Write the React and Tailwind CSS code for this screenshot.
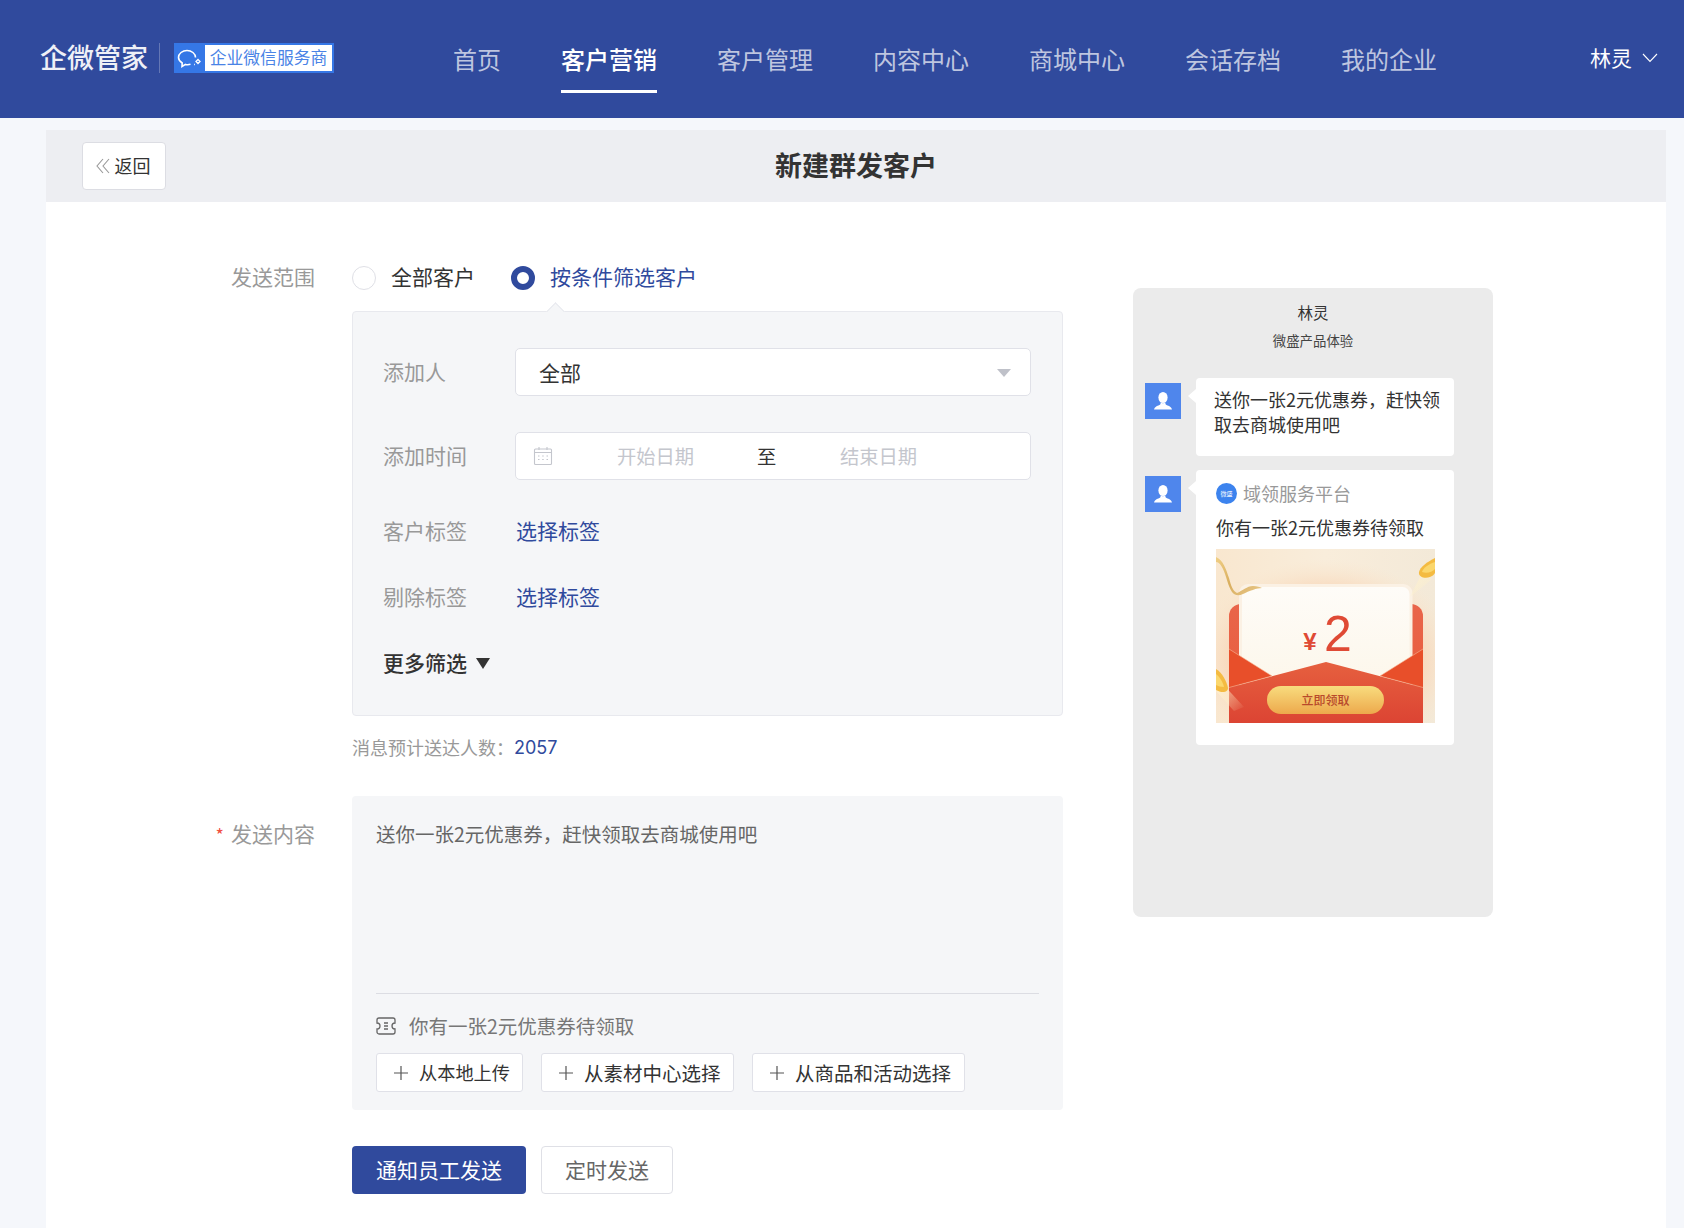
import React from "react";

const NAV = ["首页", "客户营销", "客户管理", "内容中心", "商城中心", "会话存档", "我的企业"];

function Avatar() {
  return (
    <div className="w-[36px] h-[36px] bg-[#4f86ec] flex items-center justify-center shrink-0">
      <svg width="20" height="20" viewBox="0 0 20 20" fill="#fff">
        <ellipse cx="10" cy="6.500" rx="4.600" ry="5.600" />
        <path d="M7.600 11.400c.3 1.600-.6 2.400-2.200 3C3.400 15.200 1.500 15.900 1 18.600h18c-.5-2.700-2.400-3.400-4.400-4.200-1.600-.6-2.500-1.400-2.200-3-1.500 1.100-3.300 1.100-4.800 0z" />
      </svg>
    </div>
  );
}

function BubbleRow({ children, className, avatarClass }) {
  return (
    <div className={"flex items-start pl-[12px] " + className}>
      <div className={avatarClass}><Avatar /></div>
      <div className="relative ml-[15px] w-[258px] bg-white rounded-[4px]">
        <div className="absolute left-[-8px] top-[11px] w-0 h-0 border-y-[7px] border-y-transparent border-r-[8px] border-r-white" />
        {children}
      </div>
    </div>
  );
}

function Coupon() {
  return (
    <svg width="219" height="174" viewBox="0 0 219 174" className="block">
      <defs>
        <linearGradient id="bgg" x1="0" y1="0" x2="1" y2="0">
          <stop offset="0" stopColor="#f9e7cf" />
          <stop offset="0.5" stopColor="#f9eddb" />
          <stop offset="1" stopColor="#f3e9d8" />
        </linearGradient>
        <radialGradient id="halo" cx="0.5" cy="0.62" r="0.62">
          <stop offset="0.7" stopColor="#f8d9bd" />
          <stop offset="1" stopColor="#f9e7cf" stopOpacity="0" />
        </radialGradient>
        <linearGradient id="envfront" x1="0" y1="0" x2="0" y2="1">
          <stop offset="0" stopColor="#e6603f" />
          <stop offset="1" stopColor="#dc4433" />
        </linearGradient>
        <linearGradient id="envback" x1="0" y1="0" x2="0" y2="1">
          <stop offset="0" stopColor="#e9654a" />
          <stop offset="1" stopColor="#e85a3a" />
        </linearGradient>
        <linearGradient id="gold" x1="0" y1="0" x2="0" y2="1">
          <stop offset="0" stopColor="#f8dc7e" />
          <stop offset="1" stopColor="#eda94c" />
        </linearGradient>
        <linearGradient id="card" x1="0" y1="0" x2="0" y2="1">
          <stop offset="0" stopColor="#fefcf8" />
          <stop offset="1" stopColor="#fcf5e6" />
        </linearGradient>
        <linearGradient id="ribbon" x1="0" y1="0" x2="1" y2="1">
          <stop offset="0" stopColor="#f0cf85" />
          <stop offset="0.5" stopColor="#d9ae5e" />
          <stop offset="1" stopColor="#e9c98c" />
        </linearGradient>
        <linearGradient id="beam" x1="0" y1="0" x2="1" y2="1">
          <stop offset="0" stopColor="#fff2cc" stopOpacity="0.8" />
          <stop offset="1" stopColor="#fff2cc" stopOpacity="0" />
        </linearGradient>
      </defs>
      <rect width="219" height="174" fill="url(#bgg)" />
      <rect x="0" y="10" width="219" height="164" fill="url(#halo)" />
      <path d="M13 67a12 12 0 0 1 12-12h170a12 12 0 0 1 12 12v107H13z" fill="url(#envback)" />
      <rect x="23" y="35" width="173.500" height="135" rx="9" fill="#fbf1e4" />
      <rect x="26" y="38" width="167.500" height="132" rx="7" fill="url(#card)" />
      <path d="M13 100L56 127L13 138.500zM207 100L164 127L207 138.500z" fill="#e84f2a" />
      <path d="M13 138.500L110 113L207 138.500V174H13z" fill="url(#envfront)" />
      <path d="M13 100L56 127M207 100L164 127M13 138.500L56 127M207 138.500L164 127" stroke="#f6b795" strokeWidth="0.600" fill="none" />
      <rect x="51" y="137" width="117" height="28" rx="14" fill="url(#gold)" />
      <text x="109.500" y="156" textAnchor="middle" fontSize="12" fontWeight="500" fill="#b8492b" fontFamily="'Noto Sans CJK SC',sans-serif">立即领取</text>
      <text x="94" y="101" textAnchor="middle" fontSize="24" fontWeight="700" fill="#df4a35" fontFamily="'Liberation Sans',sans-serif">¥</text>
      <text x="122" y="102" textAnchor="middle" fontSize="50" fill="#df4a35" fontFamily="'Liberation Sans',sans-serif">2</text>
      <path d="M0 8C7 11 10 20 13 29C15 37 17 42 21 44C26 42 31 37 37 37C41 37 44 38 46 39C41 39 33 42 27 45C23 47 19 47 16 43C12 37 10 26 7 20C5 16 3 13 0 13z" fill="url(#ribbon)" />
      <path d="M194 48L206 24L216 30z" fill="url(#beam)" />
      <path d="M219 9C211 13 204 18 203 23C202 28 209 30 214 28C216 27 218 26 219 24z" fill="#f4bb42" />
      <path d="M219 13C213 15 207 19 206 23C211 25 216 23 219 20z" fill="#fbd76d" />
      <path d="M4 132L28 158L18 162L0 142z" fill="url(#beam)" />
      <path d="M0 120C6 123 11 133 12 139C12 144 5 144 0 141z" fill="#f4bb42" />
      <path d="M0 125C3 127 7 133 8 138C5 138 2 137 0 136z" fill="#fbd76d" />
    </svg>
  );
}

function Row({ label, required, children, className = "", labelClass = "" }) {
  return (
    <div className={"flex " + className}>
      <div className={"w-[269px] shrink-0 text-right text-[21px] leading-[28px] text-[#999] " + labelClass}>
        {required && <span className="text-[#f04d3f] text-[18px] mr-[7px]">*</span>}
        {label}
      </div>
      <div className="ml-[37px] w-[711px]">{children}</div>
    </div>
  );
}

function PlusBtn({ text, className, textClass }) {
  return (
    <div className={"h-[39px] flex items-center pl-[16px] gap-[10px] bg-white border border-[#e0e1e8] rounded-[3px] text-[#333] whitespace-nowrap " + className}>
      <svg width="16" height="16" viewBox="0 0 16 16" stroke="#555" strokeWidth="1.200" fill="none" className="shrink-0"><path d="M8 1v14M1 8h14" /></svg>
      <span className={textClass}>{text}</span>
    </div>
  );
}

export default function App() {
  return (
    <div className="min-h-[1228px] h-[1228px] overflow-hidden bg-[#f5f7fb] font-['Noto_Sans_CJK_SC',sans-serif] text-[#333]">
      <header className="h-[118px] bg-[#304a9d] flex items-start relative">
        <div className="flex items-center ml-[40px] mt-[43px] h-[30px]">
          <span className="text-[27px] leading-[28px] mb-[2px] text-[#eef0f7] font-medium whitespace-nowrap">企微管家</span>
          <div className="w-[1px] h-[30px] bg-white/25 ml-[11px]" />
          <div className="ml-[14px] w-[160px] h-[30px] bg-[#3577e6] flex items-center">
            <svg width="31" height="30" viewBox="0 0 31 30" fill="none" stroke="#fff" strokeWidth="1.600" className="shrink-0">
              <path d="M16.500 21.300C15 21.700 13 21.800 11.500 21.400L8 23.500L8.200 20C5.800 18.500 4.500 16.500 4.500 14.500C4.500 10.500 8.500 7.500 13 7.500C17.500 7.500 21.500 10.500 21.500 14.500" />
              <path d="M24 16.500l2 2-2 2-2-2z" strokeWidth="1.300" />
              <path d="M20 21.500h.8" strokeWidth="1.500" />
            </svg>
            <div className="w-[127px] h-[26px] bg-white flex items-center justify-center text-[16.800px] leading-[24px] pb-[2px] text-[#4a83e6] whitespace-nowrap">企业微信服务商</div>
          </div>
        </div>
        <nav className="flex gap-[60px] ml-[119px] mt-[42px]">
          {NAV.map((n, i) => (
            <div key={n} className={"h-[51px] text-[24px] leading-[34px] whitespace-nowrap border-b-[3px] " + (i === 1 ? "text-white font-medium border-white" : "text-white/70 border-transparent")}>{n}</div>
          ))}
        </nav>
        <div className="absolute right-[26px] top-[42px] flex items-center text-white text-[21px] leading-[30px]">
          林灵
          <svg width="16" height="10" viewBox="0 0 16 10" fill="none" stroke="#fff" strokeWidth="1.100" className="ml-[10px] mt-[2px]"><path d="M1 1l7 7.500 7-7.500" /></svg>
        </div>
      </header>

      <main className="ml-[46px] mr-[18px] mt-[12px] bg-white h-[1098px]">
        <div className="h-[72px] bg-[#edeef2] relative flex items-center justify-center">
          <div className="absolute left-[36px] top-[12px] w-[84px] h-[48px] bg-white border border-[#dcdde3] rounded-[4px] flex items-center justify-center text-[18px] leading-[24px] pb-[2px] pr-[2px] text-[#333]">
            <svg width="14" height="16" viewBox="0 0 14 16" fill="none" stroke="#999" strokeWidth="1.100" className="mr-[5px] mt-[2px]"><path d="M7 1L1 8l6 7M13 1L7 8l6 7" /></svg>
            返回
          </div>
          <h1 className="text-[27px] leading-[36px] pb-[2px] font-bold text-[#333]">新建群发客户</h1>
        </div>

        <div className="flex items-start">
          <div className="w-[1017px] shrink-0">
            <Row label="发送范围" className="mt-[60px]">
              <div className="flex items-center h-[28px] text-[21px]">
                <span className="w-[24px] h-[24px] mt-[4px] rounded-full border border-[#dfe0e6] bg-white" />
                <span className="ml-[15px] leading-[28px] text-[#333]">全部客户</span>
                <span className="ml-[36px] w-[24px] h-[24px] mt-[4px] rounded-full border-[6px] border-[#304a9d] bg-white" />
                <span className="ml-[15px] leading-[28px] text-[#304a9d]">按条件筛选客户</span>
              </div>
              <div className="relative mt-[21px] h-[405px] bg-[#f5f6f8] border border-[#e8e9ee] rounded-[4px] pl-[30px] pt-[36px]">
                <div className="absolute left-[196px] top-[-7px] w-[13px] h-[13px] rotate-45 bg-[#f5f6f8] border-l border-t border-[#e8e9ee]" />
                <div className="flex items-center h-[48px]">
                  <span className="w-[132px] shrink-0 text-[21px] text-[#999]">添加人</span>
                  <div className="w-[516px] h-[48px] bg-white border border-[#e0e1e8] rounded-[5px] flex items-center justify-between pl-[23px] pr-[19px] pt-[2px] text-[21px] text-[#333]">
                    全部
                    <span className="w-0 h-0 border-x-[7px] border-x-transparent border-t-[8px] border-t-[#bfc1c9]" />
                  </div>
                </div>
                <div className="flex items-center h-[48px] mt-[36px]">
                  <span className="w-[132px] shrink-0 text-[21px] text-[#999]">添加时间</span>
                  <div className="w-[516px] h-[48px] bg-white border border-[#e0e1e8] rounded-[5px] flex items-center text-[19.300px] text-[#c4c6cd]">
                    <svg width="20" height="20" viewBox="0 0 20 20" fill="none" stroke="#c4c6cd" strokeWidth="1.100" className="ml-[17px] shrink-0">
                      <rect x="1.500" y="3" width="17" height="15.500" rx="1" />
                      <path d="M1.500 6.500h17M6 1v3M14 1v3" />
                      <path d="M5 10h1.500M9.200 10h1.500M13.500 10H15M5 13.500h1.500M9.200 13.500h1.500M13.500 13.500H15" />
                    </svg>
                    <span className="ml-[64px] w-[78px] whitespace-nowrap">开始日期</span>
                    <span className="ml-[62px] w-[20px] text-[#333]">至</span>
                    <span className="ml-[63px] whitespace-nowrap">结束日期</span>
                  </div>
                </div>
                <div className="flex items-center h-[48px] mt-[27px]">
                  <span className="w-[133px] shrink-0 text-[21px] text-[#999]">客户标签</span>
                  <span className="text-[21px] text-[#304a9d]">选择标签</span>
                </div>
                <div className="flex items-center h-[48px] mt-[18px]">
                  <span className="w-[133px] shrink-0 text-[21px] text-[#999]">剔除标签</span>
                  <span className="text-[21px] text-[#304a9d]">选择标签</span>
                </div>
                <div className="flex items-center h-[48px] mt-[18px] text-[21px] font-medium text-[#333]">
                  更多筛选
                  <span className="ml-[9px] w-0 h-0 border-x-[7px] border-x-transparent border-t-[11px] border-t-[#333]" />
                </div>
              </div>
              <div className="mt-[18px] h-[26px] flex items-center text-[18px] text-[#999]">
                消息预计送达人数：<span className="text-[#304a9d] text-[18px] font-['Inter',sans-serif]">2057</span>
              </div>
            </Row>

            <Row label="发送内容" required className="mt-[36px]" labelClass="pt-[23px]">
              <div className="h-[314px] bg-[#f5f6f8] rounded-[4px] px-[24px] pt-[24px]">
                <div className="h-[28px] text-[19.500px] leading-[28px] text-[#666]">送你一张2元优惠券，赶快领取去商城使用吧</div>
                <div className="mt-[145px] h-[1px] bg-[#dcdde3]" />
                <div className="mt-[18px] h-[28px] flex items-center text-[19.500px] text-[#777]">
                  <svg width="20" height="18" viewBox="0 0 20 18" fill="none" stroke="#666" strokeWidth="1.300" className="shrink-0">
                    <path d="M3 1h14a2 2 0 0 1 2 2v3a3 3 0 0 0 0 6v3a2 2 0 0 1-2 2H3a2 2 0 0 1-2-2v-3a3 3 0 0 0 0-6V3a2 2 0 0 1 2-2z" />
                    <path d="M8 6h4M8 9h4M8 12h4" />
                  </svg>
                  <span className="ml-[13px]">你有一张2元优惠券待领取</span>
                </div>
                <div className="mt-[13px] flex gap-[18px]">
                  <PlusBtn text="从本地上传" className="w-[147px]" textClass="text-[18.200px]" />
                  <PlusBtn text="从素材中心选择" className="w-[193px]" textClass="text-[19.500px]" />
                  <PlusBtn text="从商品和活动选择" className="w-[213px]" textClass="text-[19.500px]" />
                </div>
              </div>
              <div className="mt-[36px] flex gap-[15px]">
                <div className="w-[174px] h-[48px] bg-[#304a9d] rounded-[4px] flex items-center justify-center text-[21px] text-white">通知员工发送</div>
                <div className="w-[132px] h-[48px] bg-white border border-[#dfe0e6] rounded-[4px] flex items-center justify-center text-[21px] text-[#666]">定时发送</div>
              </div>
            </Row>
          </div>

          <aside className="ml-[70px] mt-[86px] w-[360px] h-[629px] bg-[#ebebeb] rounded-[8px] pt-[12px]">
            <div className="text-center text-[15.500px] leading-[24px] text-[#333]">林灵</div>
            <div className="text-center text-[13.400px] leading-[20px] mt-[6px] text-[#444]">微盛产品体验</div>
            <BubbleRow className="mt-[28px]" avatarClass="mt-[5px]">
              <div className="h-[78px] pl-[18px] pr-[10px] pt-[9px] text-[18px] leading-[25px] text-[#333]">送你一张2元优惠券，赶快领取去商城使用吧</div>
            </BubbleRow>
            <BubbleRow className="mt-[14px]" avatarClass="mt-[6px]">
              <div className="h-[275px] pl-[20px] pt-[13px]">
                <div className="flex items-center h-[21px]">
                  <span className="w-[21px] h-[21px] rounded-full bg-[#3c83ee] flex items-center justify-center text-white text-[6px] leading-[7px] text-center shrink-0">微盛</span>
                  <span className="ml-[6px] text-[18px] text-[#999] whitespace-nowrap">域领服务平台</span>
                </div>
                <div className="mt-[9px] h-[28px] text-[18px] leading-[28px] text-[#333] whitespace-nowrap">你有一张2元优惠券待领取</div>
                <div className="mt-[8px]"><Coupon /></div>
              </div>
            </BubbleRow>
          </aside>
        </div>
      </main>
    </div>
  );
}
